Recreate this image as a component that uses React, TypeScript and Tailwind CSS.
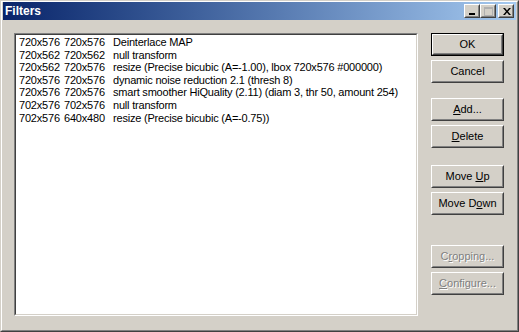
import React from 'react';

const rows = [
  ['720x576', '720x576', 'Deinterlace MAP'],
  ['720x562', '720x562', 'null transform'],
  ['720x562', '720x576', 'resize (Precise bicubic (A=-1.00), lbox 720x576 #000000)'],
  ['720x576', '720x576', 'dynamic noise reduction 2.1 (thresh 8)'],
  ['720x576', '720x576', 'smart smoother HiQuality (2.11) (diam 3, thr 50, amount 254)'],
  ['702x576', '702x576', 'null transform'],
  ['702x576', '640x480', 'resize (Precise bicubic (A=-0.75))'],
];

const Btn = ({
  children,
  className = '',
  isDefault = false,
  disabled = false,
}: {
  children: React.ReactNode;
  className?: string;
  isDefault?: boolean;
  disabled?: boolean;
}) => (
  <div className={`h-[23px] w-[73px] ${isDefault ? 'border border-black' : ''} ${className}`}>
    <div className="h-full w-full border border-t-white border-l-white border-r-[#404040] border-b-[#404040]">
      <div
        className={`flex h-full w-full items-center justify-center border border-t-[#d4d0c8] border-l-[#d4d0c8] border-r-[#808080] border-b-[#808080] text-[11px] leading-none ${
          disabled ? 'text-[#808080] [text-shadow:1px_1px_0_#fff]' : 'text-black'
        }`}
      >
        {children}
      </div>
    </div>
  </div>
);

const CapBtn = ({ children, className = '' }: { children: React.ReactNode; className?: string }) => (
  <div className={`h-[14px] w-[16px] bg-[#d4d0c8] border border-t-white border-l-white border-r-[#404040] border-b-[#404040] ${className}`}>
    <div className="relative h-full w-full border border-t-[#d4d0c8] border-l-[#d4d0c8] border-r-[#808080] border-b-[#808080]">
      {children}
    </div>
  </div>
);

export default function App() {
  return (
    <div
      className="h-[332px] w-[519px] bg-[#d4d0c8] border border-t-[#d4d0c8] border-l-[#d4d0c8] border-r-[#404040] border-b-[#404040]"
      style={{ fontFamily: '"Liberation Sans", Arial, sans-serif' }}
    >
      <div className="flex h-full w-full flex-col border border-t-white border-l-white border-r-[#808080] border-b-[#808080] px-[1px] pb-[1px]">
        {/* Title bar */}
        <div className="flex h-[18px] items-center bg-gradient-to-r from-[#0a246a] to-[#a6caf0] pl-[2px] pr-[2px]">
          <span className="flex-1 text-[12px] font-bold text-white">Filters</span>
          <CapBtn>
            <div className="absolute left-[3px] top-[7px] h-[2px] w-[6px] bg-black" />
          </CapBtn>
          <CapBtn>
            <div className="absolute left-[2px] top-[1px] h-[9px] w-[9px] border border-t-2 border-[#b0b0b0]" />
          </CapBtn>
          <CapBtn className="ml-[2px]">
            <svg className="absolute left-[3px] top-[2px]" width="8" height="7" viewBox="0 0 8 7">
              <path d="M0 0h2l2 2.5L6 0h2L5 3.5 8 7H6L4 4.5 2 7H0l3-3.5z" fill="#000" />
            </svg>
          </CapBtn>
        </div>

        {/* Body */}
        <div className="flex flex-1 gap-[13px] pl-[11px] pr-[12px] pt-[13px] pb-[13px]">
          <div className="flex-1 border border-t-[#808080] border-l-[#808080] border-r-white border-b-white">
            <div className="h-full w-full bg-white border border-t-[#404040] border-l-[#404040] border-r-[#d4d0c8] border-b-[#d4d0c8] pl-[3px] pt-[1px] text-[11px] tracking-[-0.2px] text-black">
              {rows.map((r, i) => (
                <div key={i} className="grid h-[12.6px] grid-cols-[45px_49px_1fr] items-center leading-[13px] whitespace-nowrap">
                  <span>{r[0]}</span>
                  <span>{r[1]}</span>
                  <span>{r[2]}</span>
                </div>
              ))}
            </div>
          </div>

          <div className="flex w-[73px] flex-col">
            <Btn isDefault>OK</Btn>
            <Btn className="mt-[4px]">Cancel</Btn>
            <Btn className="mt-[15px]">
              <span><u>A</u>dd...</span>
            </Btn>
            <Btn className="mt-[4px]">
              <span><u>D</u>elete</span>
            </Btn>
            <Btn className="mt-[17px]">
              <span>Move <u>U</u>p</span>
            </Btn>
            <Btn className="mt-[4px]">
              <span>Move D<u>o</u>wn</span>
            </Btn>
            <Btn className="mt-[30px]" disabled>
              <span>C<u>r</u>opping...</span>
            </Btn>
            <Btn className="mt-[4px]" disabled>
              <span><u>C</u>onfigure...</span>
            </Btn>
          </div>
        </div>
      </div>
    </div>
  );
}
